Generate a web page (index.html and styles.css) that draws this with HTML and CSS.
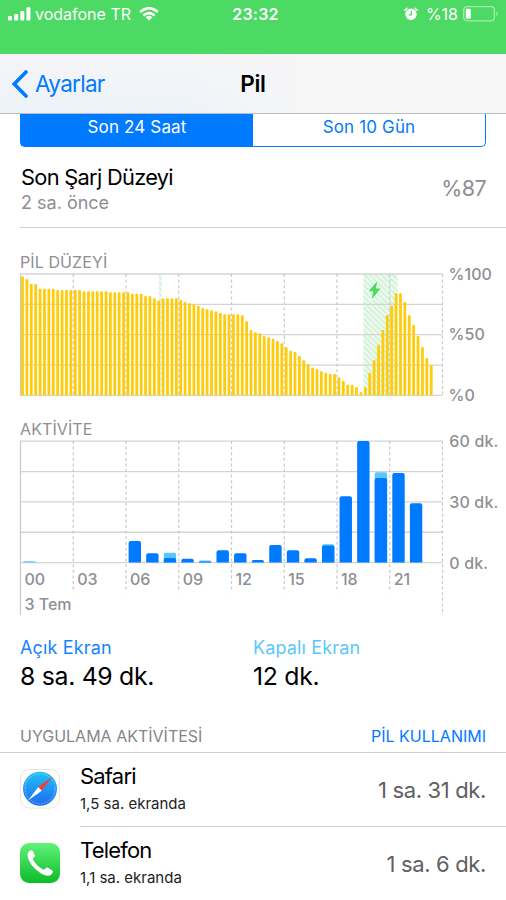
FILE: index.html
```html
<!DOCTYPE html>
<html lang="tr">
<head>
<meta charset="utf-8">
<title>Pil</title>
<link rel="stylesheet" href="styles.css">
</head>
<body>
<header class="status">
  <div class="status-left">
    <svg class="signal" width="23" height="14" viewBox="0 0 23 14"><g fill="#fff"><rect x="0" y="9" width="4" height="4.500" rx="1"/><rect x="6.200" y="7" width="4" height="6.500" rx="1"/><rect x="12.300" y="4" width="4" height="9.500" rx="1"/><rect x="18.400" y="0.300" width="4" height="13.200" rx="1"/></g></svg>
    <span class="carrier">vodafone TR</span>
    <svg class="wifi" width="20" height="14" viewBox="0 0 20 14"><g fill="none" stroke="#fff" stroke-width="2.500"><path d="M1.100 5Q10-2.700 18.900 5"/><path d="M4.400 8.500Q10 3.700 15.600 8.500"/></g><path fill="#fff" d="M6.600 10.200Q10 7.400 13.400 10.200L10 13.500Z"/></svg>
  </div>
  <span class="clock">23:32</span>
  <div class="status-right">
    <svg class="alarm" width="14" height="14" viewBox="0 0 14 14"><circle cx="7" cy="7.300" r="5.700" fill="#fff"/><path d="M.8 3.200L3 1.200M13.200 3.200L11 1.200" stroke="#fff" stroke-width="1.500" stroke-linecap="round"/><path d="M7.400 4v3.900H4.600" fill="none" stroke="#4cd964" stroke-width="1.200"/></svg>
    <span class="percent">%18</span>
    <svg class="battery" width="36" height="16" viewBox="0 0 36 16"><rect x=".7" y=".7" width="30.600" height="14.100" rx="3.200" fill="none" stroke="#a5ecb1" stroke-width="1.300"/><rect x="2.800" y="2.800" width="5" height="10" rx="1" fill="#fff"/><path d="M33.300 5.300Q36 7.800 33.300 10.300Z" fill="#a5ecb1"/></svg>
  </div>
</header>

<nav class="nav">
  <a class="back"><svg width="17" height="28" viewBox="0 0 17 28"><path d="M15 2L3.200 14L15 26" fill="none" stroke="#007aff" stroke-width="3.600" stroke-linecap="round" stroke-linejoin="miter"/></svg><span>Ayarlar</span></a>
  <h1>Pil</h1>
</nav>

<main>
  <div class="segments">
    <div class="segment active"><span>Son 24 Saat</span></div>
    <div class="segment"><span>Son 10 Gün</span></div>
  </div>

  <section class="last-charge">
    <div>
      <div class="title">Son Şarj Düzeyi</div>
      <div class="ago">2 sa. önce</div>
    </div>
    <div class="level">%87</div>
  </section>

  <h2 class="heading level-heading">PİL DÜZEYİ</h2>
  <svg class="chart" id="level-chart" width="506" height="142" viewBox="0 264 506 142">
    <defs>
      <pattern id="stripes" width="5.600" height="5.600" patternUnits="userSpaceOnUse">
        <rect width="5.600" height="5.600" fill="#edfaef"/>
        <path d="M-1-1L6.600 6.600M4.600-1L6.600 1M-1 4.600L1 6.600" stroke="#c0edc7" stroke-width="1"/>
      </pattern>
    </defs>
  </svg>

  <h2 class="heading activity-heading">AKTİVİTE</h2>
  <svg class="chart" id="activity-chart" width="506" height="187" viewBox="0 430 506 187"></svg>

  <section class="totals">
    <div><div class="label on">Açık Ekran</div><div class="value">8 sa. 49 dk.</div></div>
    <div><div class="label off">Kapalı Ekran</div><div class="value">12 dk.</div></div>
  </section>

  <div class="list-head"><span>UYGULAMA AKTİVİTESİ</span><a>PİL KULLANIMI</a></div>

  <section class="apps">
    <div class="app">
      <svg class="icon" width="40" height="40" viewBox="0 0 40 40">
        <defs><linearGradient id="sky" x2="0" y2="1"><stop stop-color="#1fc2f5"/><stop offset="1" stop-color="#1f6af0"/></linearGradient></defs>
        <rect x=".5" y=".5" width="39" height="38.500" rx="8.800" fill="#fff" stroke="#e6e6e6"/>
        <circle cx="20" cy="19.700" r="17" fill="url(#sky)"/>
        <circle cx="20" cy="19.700" r="15" fill="none" stroke="#fff" stroke-opacity=".4" stroke-width="1.600" stroke-dasharray=".6 .95"/>
        <path d="M32 8L18.300 18L21.700 21.700Z" fill="#ff3b30"/><path d="M8 31.400L18.300 18L21.700 21.700Z" fill="#fff"/>
      </svg>
      <div class="row">
        <div><div class="name">Safari</div><div class="detail">1,5 sa. ekranda</div></div>
        <div class="time">1 sa. 31 dk.</div>
      </div>
    </div>
    <div class="app">
      <svg class="icon" width="40" height="40" viewBox="0 0 40 40">
        <defs><linearGradient id="leaf" x2="0" y2="1"><stop stop-color="#62f27a"/><stop offset="1" stop-color="#0bbc29"/></linearGradient></defs>
        <rect width="40" height="40" rx="9" fill="url(#leaf)"/>
        <path fill="#fff" d="M8 9.600C8.500 8.300 10.300 7.300 11.600 7.200C12.500 7.200 13 8 14.800 11.900C15.400 13.300 14.200 14.200 13.400 15.100C12.400 16.200 13.200 17.100 14.200 18.500C16.700 22 19.300 24.300 22.200 26C23.500 26.700 24.300 26.800 25.200 25.700C26.200 24.500 27 24.100 28.300 24.900C32.400 27.300 33 27.800 32.800 28.900C32.300 31 30.400 32.700 27.700 32.700C24.500 32.600 19.700 30.400 15.300 26.100C10.100 21 6.300 14.200 8 9.600Z"/>
      </svg>
      <div class="row">
        <div><div class="name">Telefon</div><div class="detail">1,1 sa. ekranda</div></div>
        <div class="time">1 sa. 6 dk.</div>
      </div>
    </div>
  </section>
</main>
<script src="charts.js"></script>
</body>
</html>
```
FILE: styles.css
```css
* { box-sizing: border-box; }
body {
  margin: 0;
  width: 506px;
  height: 900px;
  overflow: hidden;
  background: #fff;
  color: #000;
  font-family: Inter, "Liberation Sans", sans-serif;
}
svg { display: block; flex: none; }
h1, h2 { margin: 0; }
span, a, .title, .ago, .level, .label, .value, .name, .detail, .time { white-space: nowrap; }

.status {
  height: 54px;
  padding: 5px 7px 0 8px;
  display: grid;
  grid-template-columns: 1fr auto 1fr;
  align-items: start;
  background: #4cd964;
  color: #fff;
  font-size: 16px;
  line-height: 18px;
}
.status-left, .status-right { display: flex; }
.status-right { justify-content: flex-end; }
.signal { margin-top: 2px; }
.carrier { margin-left: 4px; }
.wifi { margin: 2px 0 0 8px; }
.clock { margin-left: 4px; font-weight: 600; letter-spacing: 0.2px; }
.alarm { margin-top: 2px; }
.percent { margin-left: 8px; }
.battery { margin: 1px 0 0 5px; }

.nav {
  height: 60px;
  display: grid;
  grid-template-columns: 1fr auto 1fr;
  align-items: center;
  border-bottom: 1px solid #b9bcc0;
  background: linear-gradient(90deg, #f6f6f700 35%, #f6f6f7 60%), linear-gradient(#f5f5f8, #edf3f9);
}
.back { display: flex; align-items: center; padding-left: 11px; color: #007aff; font-size: 22.500px; letter-spacing: -0.700px; }
.back span { margin-left: 7px; }
h1 { font-size: 22.500px; font-weight: 600; letter-spacing: -0.300px; }

.segments { height: 33px; margin: 0 20px; display: flex; border: 1px solid #007aff; border-top: 0; border-radius: 0 0 5px 5px; }
.segment { flex: 1; display: flex; justify-content: center; padding-top: 3px; color: #007aff; font-size: 17px; line-height: 20px; letter-spacing: 0.150px; }
.active { background: #007aff; color: #fff; }

.last-charge { height: 81px; margin: 0 0 0 20px; padding: 16px 20px 0 1px; display: flex; justify-content: space-between; border-bottom: 1px solid #d0d0d2; }
.title { font-size: 21.800px; line-height: 28px; letter-spacing: -0.700px; }
.ago { margin-top: 1px; font-size: 18px; line-height: 22px; color: #8e8e93; }
.level { margin-top: 11px; font-size: 21.500px; line-height: 28px; color: #8e8e93; letter-spacing: -0.600px; }

.heading { padding-left: 20px; color: #8e8e93; font-size: 16px; font-weight: 400; line-height: 20px; letter-spacing: 0.100px; }
.level-heading { margin-top: 24px; height: 12px; }
.activity-heading { margin-top: 13px; height: 11px; }
.chart text { fill: #8e8e93; font-size: 16px; font-weight: 500; }

.totals { height: 102px; padding: 20px 0 0 20px; display: grid; grid-template-columns: 233px 1fr; }
.label { font-size: 18px; line-height: 22px; letter-spacing: 0.150px; }
.on { color: #1485ff; }
.off { color: #5ac8fa; }
.value { font-size: 24.800px; line-height: 35px; letter-spacing: -0.300px; }

.list-head { height: 34px; padding: 7px 20px 0; display: flex; justify-content: space-between; border-bottom: 1px solid #d0d0d2; color: #85858a; font-size: 16px; line-height: 20px; }
.list-head a { color: #007aff; }

.app { display: flex; height: 74px; }
.icon { margin: 16px 20px 0 20px; }
.row { flex: 1; display: flex; justify-content: space-between; padding: 9px 20px 0 0; border-bottom: 1px solid #d0d0d2; }
.app:last-child .row { border: 0; }
.name { font-size: 22px; line-height: 28px; letter-spacing: -0.800px; }
.detail { margin-top: 4px; font-size: 15px; line-height: 20px; color: #222; }
.time { margin-top: 14px; font-size: 22px; line-height: 28px; letter-spacing: -0.350px; color: #606063; }
```
FILE: charts.js
```js
const NS = "http://www.w3.org/2000/svg";
const LEFT = 20.5, RIGHT = 442.5, THIRD = 52.75;

function add(parent, tag, attrs, text) {
  const node = document.createElementNS(NS, tag);
  for (const key in attrs) node.setAttribute(key, attrs[key]);
  if (text) node.textContent = text;
  parent.appendChild(node);
}

function rows(svg, top, step) {
  for (let i = 0; i < 5; i++) {
    add(svg, "line", { x1: LEFT, x2: RIGHT, y1: top + i * step, y2: top + i * step, stroke: "#d4d4d6", "stroke-width": 1.3 });
  }
}

function columns(svg, top, bottom, edgeBottom) {
  for (let i = 0; i < 9; i++) {
    const x = LEFT + i * THIRD;
    add(svg, "line", { x1: x, x2: x, y1: top, y2: i % 8 ? bottom : edgeBottom, stroke: "#c8c8cc", "stroke-width": 1.2, "stroke-dasharray": i ? "3 2.6" : "none" });
  }
}

function bar(svg, x, top, width, base, radius, fill) {
  const r = Math.min(radius, base - top);
  add(svg, "path", { fill, d: `M${x} ${base}V${top + r}q0 ${-r} ${r} ${-r}h${width - 2 * r}q${r} 0 ${r} ${r}V${base}Z` });
}

/* Battery level: [number of quarter hours, y of the bar top] */
const level = document.getElementById("level-chart");
const levels = [[1,276.3],[1,279],[2,284],[4,288.7],[6,290],[6,291.3],[5,292.3],[3,293.7],[2,296],[1,298.3],[1,300.5],[4,298.3],[1,299.7],[1,302],[1,303.3],[1,304.3],[1,305.7],[1,308],[1,309.3],[1,310.3],[1,311.3],[1,313],[4,314.3],[1,315.3],[1,321.3],[1,330],[1,332.3],[1,333.3],[1,336],[1,337.3],[1,338.7],[1,341],[1,343.3],[1,347.3],[1,350.7],[1,352],[1,355.7],[1,360.3],[1,364],[1,367.5],[1,369],[1,371.3],[1,372.7],[2,374],[1,377.3],[1,381],[2,384.7],[1,387],[1,392],[1,387],[1,372.7],[1,360],[1,344.7],[1,330],[1,315.3],[1,305.7],[2,293.3],[1,302],[1,315.3],[1,325],[1,336],[1,347],[1,358],[1,365]];
add(level, "rect", { x: 159, y: 274, width: 2.8, height: 121, fill: "url(#stripes)" });
add(level, "rect", { x: 363.4, y: 274, width: 34.2, height: 121, fill: "url(#stripes)" });
rows(level, 274, 30.35);
columns(level, 274, 395.4, 395.4);
let slot = 0;
for (const [count, top] of levels) {
  for (let i = 0; i < count; i++, slot++) bar(level, 21.1 + slot * 4.395, top, 2.8, 395.2, 1, "#ffcc0c");
}
add(level, "path", { fill: "#4cd964", stroke: "#f2fbf3", "stroke-width": 1.5, "paint-order": "stroke", d: "M377.3 281L368.5 291.300H373.200L371.700 299.300L380.800 288.600H375.900Z" });
[["%100", 279.5], ["%50", 340.3], ["%0", 401]].forEach(([t, y]) => add(level, "text", { x: 448.6, y }, t));

/* Activity: [hour, y of the total, y of the screen-on part] */
const activity = document.getElementById("activity-chart");
const hours = [[0,561.2,562.5],[6,541,541],[7,553.3,553.3],[8,552.7,558],[9,558.7,558.7],[10,560.5,561.4],[11,550.3,550.3],[12,553.3,553.3],[13,560,560],[14,545,545],[15,550.3,550.3],[16,558.3,558.3],[17,544.2,545.5],[18,496.2,496.2],[19,441,441],[20,472.2,478],[21,473,473],[22,503.3,503.3]];
rows(activity, 441.2, 30.35);
columns(activity, 441, 592.5, 615);
for (const [hour, total, on] of hours) {
  const x = 128.6 + (hour - 6) * 17.58;
  if (total < on) bar(activity, x, total, 12.4, 562.5, 2, "#5ac8fa");
  if (on < 562.5) bar(activity, x, on, 12.4, 562.5, 2, "#007aff");
}
["00", "03", "06", "09", "12", "15", "18", "21"].forEach((t, i) => add(activity, "text", { x: 24.4 + i * THIRD, y: 585 }, t));
add(activity, "text", { x: 24.4, y: 609.7 }, "3 Tem");
[["60 dk.", 447], ["30 dk.", 508], ["0 dk.", 568.5]].forEach(([t, y]) => add(activity, "text", { x: 449.3, y, "letter-spacing": 0.15 }, t));
```
